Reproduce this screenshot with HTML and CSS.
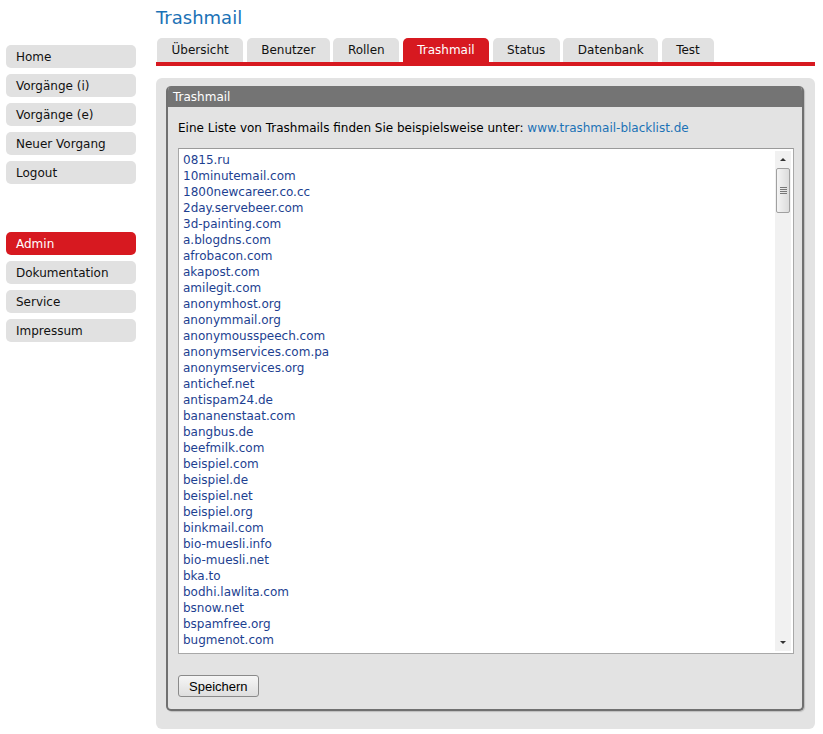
FILE: index.html
```html
<!DOCTYPE html>
<html lang="de">
<head>
<meta charset="utf-8">
<title>Trashmail</title>
<link rel="stylesheet" href="styles.css">
</head>
<body>
<div class="page">
  <nav class="sidebar">
    <a class="nav-item">Home</a>
    <a class="nav-item">Vorgänge (i)</a>
    <a class="nav-item">Vorgänge (e)</a>
    <a class="nav-item">Neuer Vorgang</a>
    <a class="nav-item">Logout</a>
    <div class="nav-spacer"></div>
    <a class="nav-item active">Admin</a>
    <a class="nav-item">Dokumentation</a>
    <a class="nav-item">Service</a>
    <a class="nav-item">Impressum</a>
  </nav>
  <main class="main">
    <h1 class="title">Trashmail</h1>
    <div class="tabs">
      <a class="tab">Übersicht</a>
      <a class="tab">Benutzer</a>
      <a class="tab">Rollen</a>
      <a class="tab active">Trashmail</a>
      <a class="tab">Status</a>
      <a class="tab">Datenbank</a>
      <a class="tab">Test</a>
    </div>
    <div class="panel">
      <div class="box">
        <div class="box-head">Trashmail</div>
        <div class="box-body">
          <p class="intro">Eine Liste von Trashmails finden Sie beispielsweise unter: <a class="link">www.trashmail-blacklist.de</a></p>
          <div class="listarea">
            <div class="list">
              <div>0815.ru</div>
              <div>10minutemail.com</div>
              <div>1800newcareer.co.cc</div>
              <div>2day.servebeer.com</div>
              <div>3d-painting.com</div>
              <div>a.blogdns.com</div>
              <div>afrobacon.com</div>
              <div>akapost.com</div>
              <div>amilegit.com</div>
              <div>anonymhost.org</div>
              <div>anonymmail.org</div>
              <div>anonymousspeech.com</div>
              <div>anonymservices.com.pa</div>
              <div>anonymservices.org</div>
              <div>antichef.net</div>
              <div>antispam24.de</div>
              <div>bananenstaat.com</div>
              <div>bangbus.de</div>
              <div>beefmilk.com</div>
              <div>beispiel.com</div>
              <div>beispiel.de</div>
              <div>beispiel.net</div>
              <div>beispiel.org</div>
              <div>binkmail.com</div>
              <div>bio-muesli.info</div>
              <div>bio-muesli.net</div>
              <div>bka.to</div>
              <div>bodhi.lawlita.com</div>
              <div>bsnow.net</div>
              <div>bspamfree.org</div>
              <div>bugmenot.com</div>
            </div>
            <div class="scrollbar">
              <div class="sb-arrow up"></div>
              <div class="sb-thumb"><span></span><span></span><span></span><span></span></div>
              <div class="sb-track"></div>
              <div class="sb-arrow down"></div>
            </div>
          </div>
          <button class="btn">Speichern</button>
        </div>
      </div>
    </div>
  </main>
</div>
</body>
</html>
```
FILE: styles.css
```css
html, body {
  margin: 0;
  padding: 0;
  background: #ffffff;
}
body {
  font-family: "DejaVu Sans", Verdana, sans-serif;
  font-size: 12px;
  color: #000;
}
.page {
  display: flex;
  align-items: flex-start;
  padding: 0 8px 0 6px;
}
.sidebar {
  width: 130px;
  flex: none;
  margin-top: 45px;
  display: flex;
  flex-direction: column;
  gap: 6px;
}
.nav-item {
  display: block;
  height: 23px;
  line-height: 24px;
  padding-left: 10px;
  background: #e1e1e1;
  border-radius: 5px;
  color: #111;
  text-decoration: none;
}
.nav-item.active {
  background: #d71920;
  color: #fff;
}
.nav-spacer {
  height: 36px;
}
.main {
  flex: 1;
  margin-left: 20px;
}
.title {
  margin: 8px 0 0 0;
  font-size: 18px;
  font-weight: normal;
  color: #1b72b6;
  height: 30px;
  line-height: 20px;
}
.tabs {
  display: flex;
  gap: 3.5px;
  padding-left: 1px;
  border-bottom: 4px solid #d71920;
}
.tab {
  display: block;
  height: 24px;
  line-height: 24px;
  padding: 0 14.5px;
  background: #e1e1e1;
  border-radius: 5px 5px 0 0;
  color: #111;
}
.tab.active {
  background: #d71920;
  color: #fff;
}
.panel {
  margin-top: 12px;
  background: #e3e3e3;
  border-radius: 6px;
  padding: 8px 11px 18px 10px;
}
.box {
  border: 2px solid #707070;
  border-top: none;
  border-radius: 5px;
  overflow: hidden;
  background: #e3e3e3;
  box-shadow: 1px 1px 1px #bdbdbd;
}
.box-head {
  background: #747474;
  color: #fff;
  height: 21px;
  line-height: 23px;
  padding-left: 5px;
}
.box-body {
  padding: 0 8px 12px 10px;
}
.intro {
  margin: 13px 0 12px 0;
  line-height: 16px;
}
.link {
  color: #1b72b6;
}
.listarea {
  display: flex;
  height: 504px;
  background: #fff;
  border: 1px solid #a8a8a8;
  border-top-color: #9a9a9a;
}
.list {
  flex: 1;
  overflow: hidden;
  padding: 3px 4px;
  line-height: 16px;
  color: #1d3f91;
}
.scrollbar {
  width: 16px;
  margin: 2px 2px 2px 0;
  display: flex;
  flex-direction: column;
  background: #f1f1f1;
}
.sb-arrow {
  height: 17px;
  position: relative;
}
.sb-arrow::after {
  content: "";
  position: absolute;
  left: 5px;
  width: 0;
  height: 0;
  border-left: 3px solid transparent;
  border-right: 3px solid transparent;
}
.sb-arrow.up::after {
  top: 7px;
  border-bottom: 3px solid #333;
}
.sb-arrow.down::after {
  top: 7px;
  border-top: 3px solid #333;
}
.sb-thumb {
  height: 43px;
  margin: 0 1px;
  border: 1px solid #a0a0a0;
  border-radius: 2px;
  background: linear-gradient(to right, #f4f4f4, #dcdcdc);
  display: flex;
  flex-direction: column;
  justify-content: center;
  align-items: center;
  gap: 1px;
}
.sb-thumb span {
  display: block;
  width: 7px;
  height: 1px;
  background: #777;
}
.sb-track {
  flex: 1;
}
.btn {
  margin-top: 21px;
  font-family: "Liberation Sans", Arial, sans-serif;
  font-size: 13px;
  height: 22px;
  padding: 0 10px;
  border: 1px solid #8a8a8a;
  border-radius: 3px;
  background: linear-gradient(to bottom, #f6f6f6, #dedede);
  color: #000;
}
```
